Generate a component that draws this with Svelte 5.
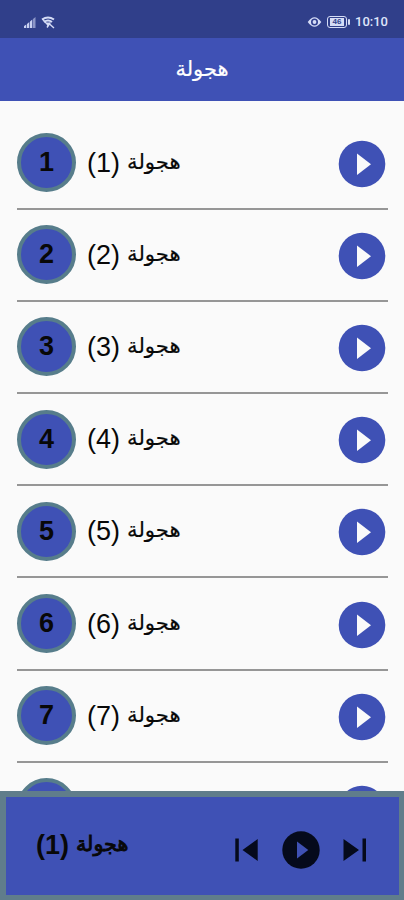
<script>
  const name = 'هجولة';
  const tracks = [1, 2, 3, 4, 5, 6, 7];
</script>

{#snippet playIcon()}
  <svg class="play" width="48" height="48" viewBox="0 0 48 48">
    <circle cx="24" cy="24" r="23.300" fill="#3f51b5" />
    <path d="M19 13.500v21.500L33 24.200z" fill="#fafafa" />
  </svg>
{/snippet}

<div class="screen">
  <div class="status">
    <div class="group">
      <svg width="13" height="13" viewBox="0 0 13 13" fill="#c9d1f2">
        <path d="M0 12V10l2.300-1.500V12zM3 12V8l2.300-2V12zM6 12V5.500l2.300-2V12z" />
        <path d="M9 12V3l2.500-2v11z" opacity=".6" />
      </svg>
      <svg width="15" height="13" viewBox="0 0 15 13" fill="none" stroke="#d5dcf6">
        <path d="M1 3.500Q7 -.5 13 3.500M3 6Q7 3 11 6" stroke-width="2" />
        <path d="M4 6.500h6L7 10.500z" fill="#d5dcf6" stroke="none" />
        <path d="M1.500 3L5 7M8 7.500l5 4.500M9 7l-3 4.500" stroke-width="1.400" />
      </svg>
    </div>
    <div class="group">
      <svg width="15" height="12" viewBox="0 0 15 12">
        <path d="M.7 6Q7.500-3.500 14.300 6Q7.500 15.500.7 6z" fill="#d5dcf6" />
        <circle cx="7.500" cy="6" r="3.500" fill="#303f8f" />
        <circle cx="7.500" cy="6" r="1.900" fill="#d5dcf6" />
      </svg>
      <span class="battery"><b>46</b></span>
      <span class="time">10:10</span>
    </div>
  </div>

  <header><span dir="rtl">{name}</span></header>

  <main>
    {#each tracks as n}
      <div class="row">
        <div class="badge">{n}</div>
        <div class="title" dir="rtl"><span class="ar">{name}</span><span class="num">({n})</span></div>
        {@render playIcon()}
      </div>
    {/each}
    <div class="row">
      <div class="badge"></div>
      {@render playIcon()}
    </div>
  </main>

  <footer>
    <div class="title current" dir="rtl"><span class="ar">{name}</span><span class="num">(1)</span></div>
    <div class="controls">
      <svg width="24" height="24" viewBox="0 0 24 24" fill="#050a1c">
        <path d="M.3.500h3.500v23H.3zM22.700 1v22L7.500 12z" />
      </svg>
      <svg width="38" height="38" viewBox="0 0 38 38">
        <circle cx="19" cy="19" r="18.700" fill="#050a1c" />
        <path d="M15 10.500v17L26.300 19z" fill="#3f51b5" />
      </svg>
      <svg width="24" height="24" viewBox="0 0 24 24" fill="#050a1c">
        <path d="M.5 1v22L16 12zM19.500.500H23v23h-3.500z" />
      </svg>
    </div>
  </footer>
</div>

<style>
  .screen {
    width: 404px;
    height: 900px;
    display: flex;
    flex-direction: column;
    overflow: hidden;
    background: #fafafa;
    font-family: "Liberation Sans", "DejaVu Sans", sans-serif;
    color: #080808;
  }
  .status {
    flex: none;
    height: 38px;
    box-sizing: border-box;
    padding: 6px 16px 0 24px;
    background: #303f8a;
    display: flex;
    align-items: center;
    justify-content: space-between;
  }
  .group {
    display: flex;
    align-items: center;
    gap: 4px;
  }
  .battery {
    box-sizing: border-box;
    position: relative;
    width: 20px;
    height: 12px;
    border: 1.5px solid #d5dcf6;
    border-radius: 3px;
    margin: 0 3px 0 1px;
    display: flex;
    align-items: center;
    justify-content: center;
  }
  .battery b {
    background: #d5dcf6;
    color: #303f8a;
    font-size: 8px;
    line-height: 8px;
    width: 14px;
    text-align: center;
  }
  .battery::after {
    content: "";
    position: absolute;
    right: -4px;
    top: 2px;
    width: 2px;
    height: 6px;
    border-radius: 1px;
    background: #d5dcf6;
  }
  .time {
    font: 500 13px/16px Roboto, sans-serif;
    color: #dfe5fa;
    margin-left: 1px;
  }
  header {
    flex: none;
    height: 62.5px;
    box-sizing: border-box;
    background: #3f51b5;
    color: #fff;
    display: flex;
    align-items: center;
    justify-content: center;
    font: 21px/30px "DejaVu Sans", sans-serif;
    -webkit-text-stroke: 0.2px;
  }
  main {
    flex: 1;
    min-height: 0;
    overflow: hidden;
    padding: 17px 16px 0 17px;
  }
  .row {
    height: 92.200px;
    box-sizing: border-box;
    border-bottom: 2px solid #969696;
    display: flex;
    align-items: center;
  }
  .badge {
    flex: none;
    box-sizing: border-box;
    width: 59px;
    height: 59px;
    border: 4px solid #577d8b;
    border-radius: 50%;
    background: #3f51b5;
    display: flex;
    align-items: center;
    justify-content: center;
    font-weight: 700;
    font-size: 27px;
  }
  .title {
    display: flex;
    align-items: baseline;
    gap: 7px;
    margin-left: 11px;
    padding-top: 2px;
    line-height: 32px;
  }
  .ar {
    font-family: "DejaVu Sans", sans-serif;
    font-size: 21.200px;
    transform: translateY(-3px);
    -webkit-text-stroke: 0.2px;
  }
  .num {
    font-size: 27px;
  }
  .current {
    padding: 0 0 7px;
  }
  .current .ar {
    font-size: 20.700px;
    -webkit-text-stroke: 0.9px;
  }
  .current .num {
    font-weight: 700;
  }
  .play {
    margin-left: auto;
    margin-right: 2px;
    position: relative;
    top: 1px;
  }
  footer {
    flex: none;
    height: 109.500px;
    box-sizing: border-box;
    border: solid #607d8b;
    border-width: 6px 5px 5px 6px;
    background: #3f51b5;
    padding: 8px 32px 0 19px;
    display: flex;
    align-items: center;
    justify-content: space-between;
  }
  .controls {
    display: flex;
    align-items: center;
    gap: 23px;
  }
</style>
